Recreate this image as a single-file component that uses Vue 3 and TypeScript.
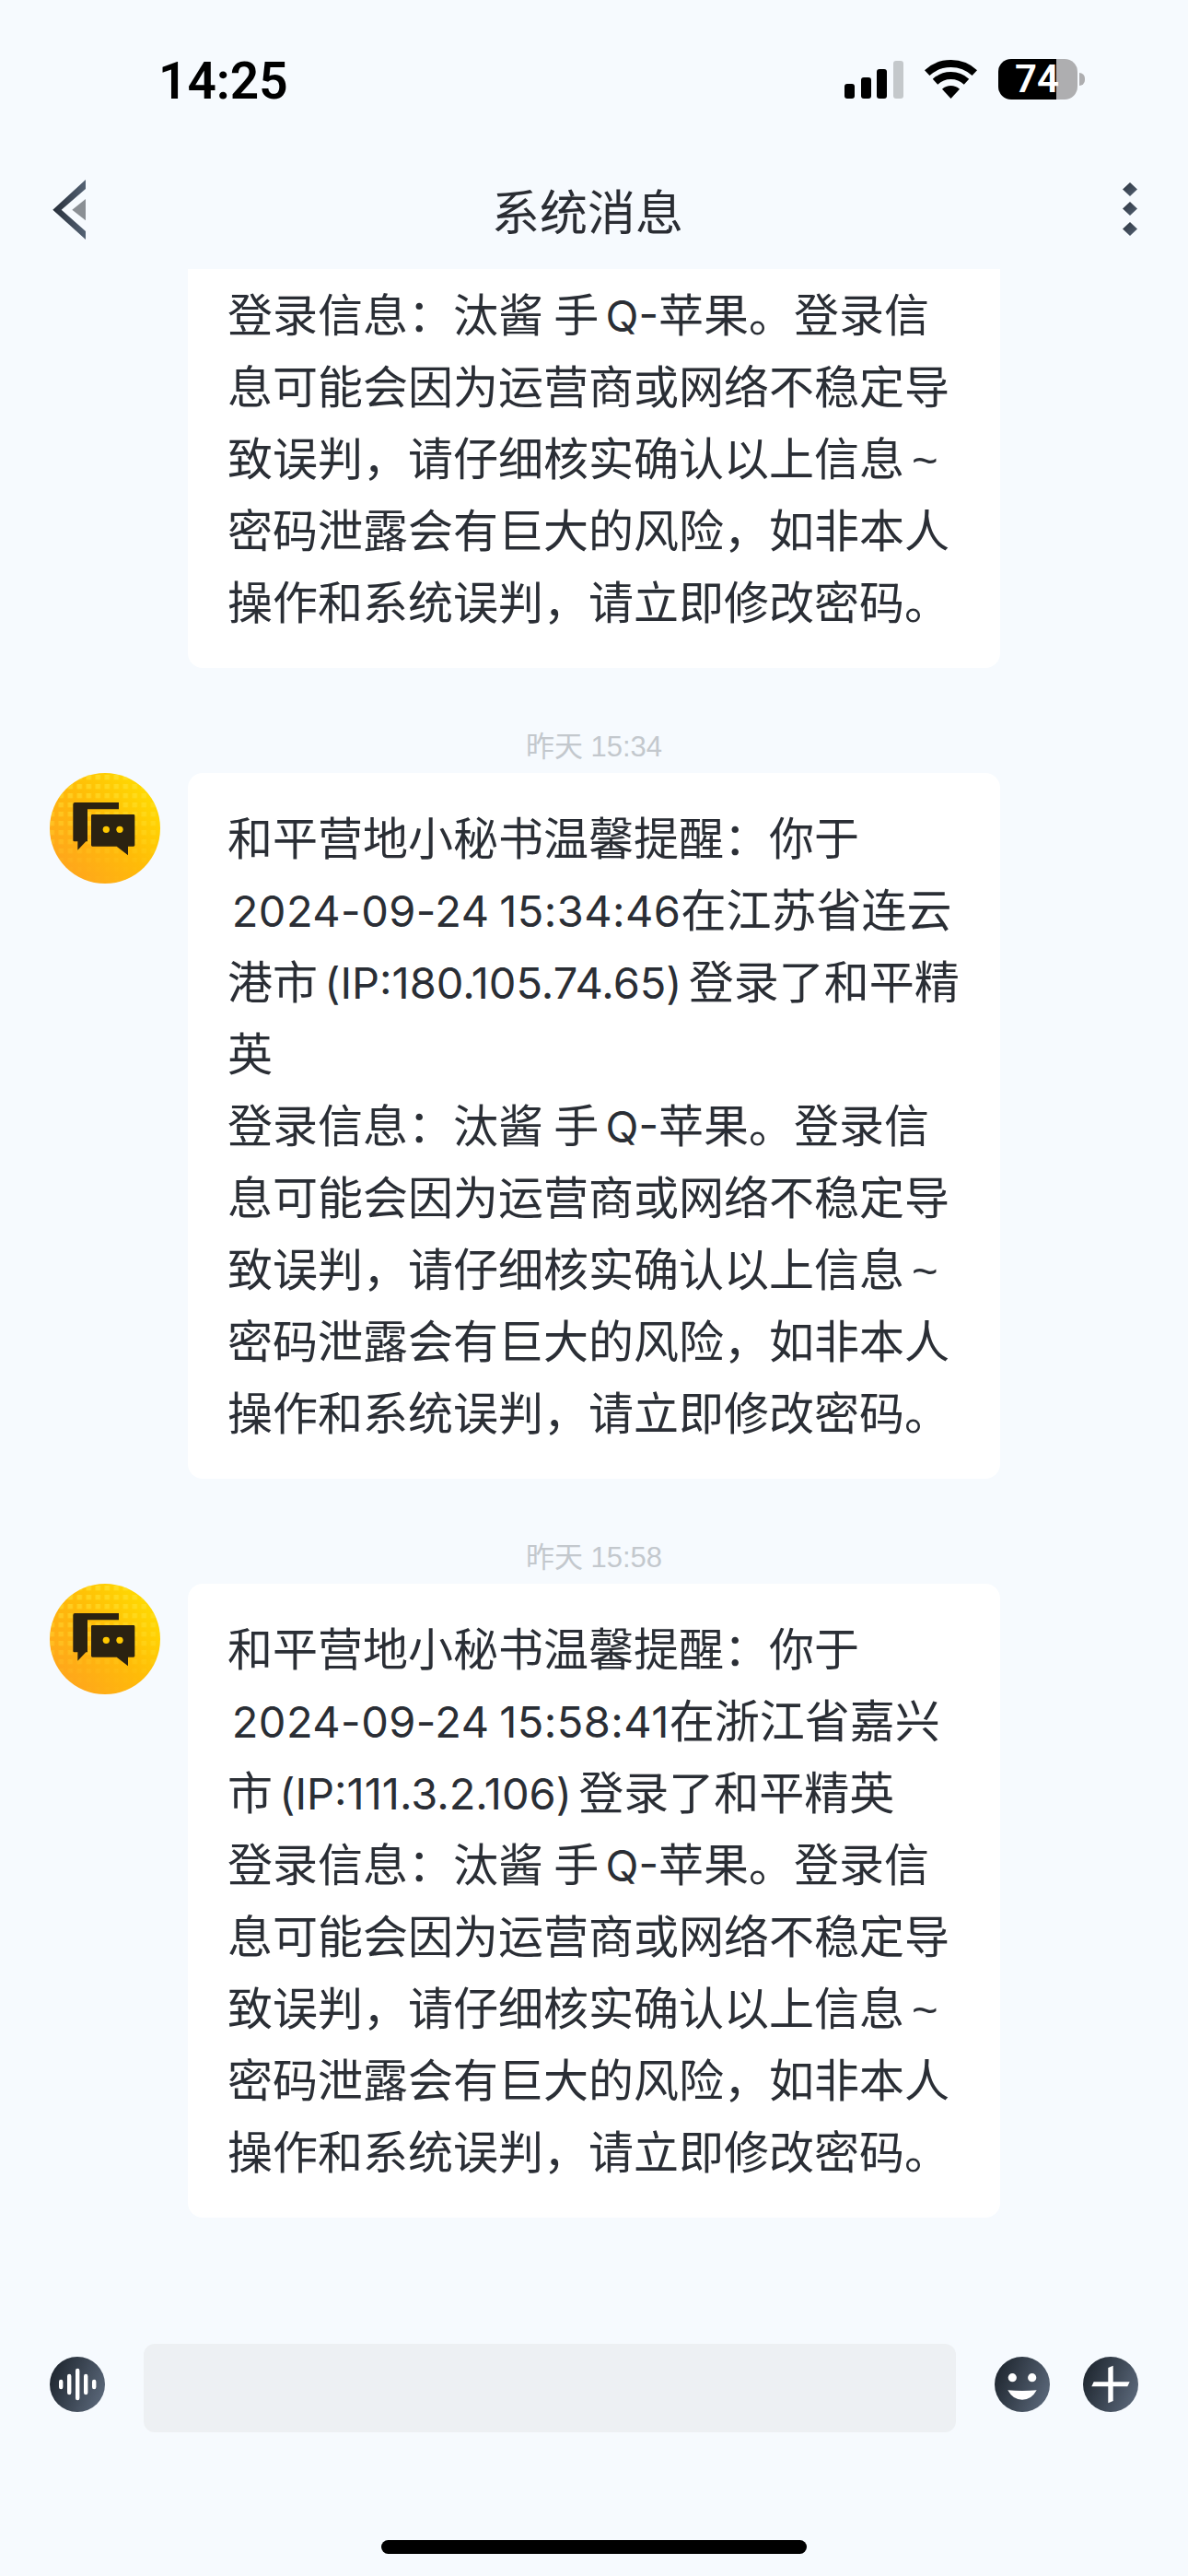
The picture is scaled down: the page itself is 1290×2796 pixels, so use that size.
<script setup lang="ts">
interface Message {
  id: number;
  time?: string;
  lines: string[];
}

const tail = [
  '登录信息：汰酱 手 Q-苹果。登录信',
  '息可能会因为运营商或网络不稳定导',
  '致误判，请仔细核实确认以上信息~',
  '密码泄露会有巨大的风险，如非本人',
  '操作和系统误判，请立即修改密码。',
];

const messages: Message[] = [
  { id: 1, lines: tail },
  {
    id: 2,
    time: '昨天 15:34',
    lines: [
      '和平营地小秘书温馨提醒：你于',
      ' 2024-09-24 15:34:46在江苏省连云',
      '港市 (IP:180.105.74.65) 登录了和平精',
      '英',
      ...tail,
    ],
  },
  {
    id: 3,
    time: '昨天 15:58',
    lines: [
      '和平营地小秘书温馨提醒：你于',
      ' 2024-09-24 15:58:41在浙江省嘉兴',
      '市 (IP:111.3.2.106) 登录了和平精英',
      ...tail,
    ],
  },
];

// ascii runs get their own span, they are set in another font than the CJK text
const parts = (line: string) => line.split(/([\x20-\x7e]+)/).filter(Boolean);
const isLatin = (part: string) => /^[\x20-\x7e]/.test(part);
const latinClass = (part: string) => {
  if (part === '~') return 'tilde';
  return part === ' ' ? 'latin gap' : 'latin';
};
</script>

<template>
  <div class="page">
    <header class="status">
      <span class="clock">14:25</span>
      <div class="status-icons">
        <svg class="signal" width="64" height="41" viewBox="0 0 64 41">
          <rect x="0" y="25" width="11" height="16" rx="3" fill="#000" />
          <rect x="18" y="18" width="11" height="23" rx="3" fill="#000" />
          <rect x="35" y="9" width="11" height="32" rx="3" fill="#000" />
          <rect x="53" y="0" width="11" height="41" rx="3" fill="#c4c8cb" />
        </svg>
        <svg class="wifi" width="57" height="42" viewBox="0 0 57 42">
          <path d="M2.7 14.1A38 38 0 0 1 54.3 14.1" fill="none" stroke="#000" stroke-width="8" />
          <path d="M11.5 23.7A25 25 0 0 1 45.5 23.7" fill="none" stroke="#000" stroke-width="8" />
          <path d="M28.5 42L19 31.8A14 14 0 0 1 38 31.8Z" fill="#000" />
        </svg>
        <div class="battery">
          <span class="battery-level">74</span>
          <span class="battery-nub"></span>
        </div>
      </div>
    </header>

    <nav class="navbar">
      <svg class="back" width="36" height="65" viewBox="7 9 36 65">
        <defs>
          <linearGradient id="backGrad" x1="0" y1="0" x2="1" y2="0">
            <stop offset="0" stop-color="#262e39" />
            <stop offset="1" stop-color="#556375" />
          </linearGradient>
        </defs>
        <path d="M7.3 41.7L43 9V19L16.7 41.7L43 65V74Z" fill="url(#backGrad)" />
        <path d="M28.3 41.7L43 30V53.3Z" fill="#8a8f94" />
      </svg>
      <span class="title">系统消息</span>
      <svg class="more" width="16" height="58" viewBox="0 0 16 58">
        <defs>
          <linearGradient id="moreGrad" x1="0" y1="0" x2="1" y2="1">
            <stop offset="0" stop-color="#2a323d" />
            <stop offset="1" stop-color="#556375" />
          </linearGradient>
        </defs>
        <path d="M8 0L16 7.5L8 15L0 7.5Z" fill="url(#moreGrad)" />
        <path d="M8 21L16 28.5L8 36L0 28.5Z" fill="url(#moreGrad)" />
        <path d="M8 43L16 50.5L8 58L0 50.5Z" fill="url(#moreGrad)" />
      </svg>
    </nav>

    <main class="list">
      <template v-for="msg in messages" :key="msg.id">
        <div v-if="msg.time" class="time">{{ msg.time }}</div>
        <div :class="['row', { cut: !msg.time }]">
          <svg v-if="msg.time" class="avatar" width="120" height="120" viewBox="0 0 360 360">
            <defs>
              <linearGradient :id="`av${msg.id}`" x1="0.9" y1="0.05" x2="0.1" y2="0.75">
                <stop offset="0" stop-color="#ffde00" />
                <stop offset="0.55" stop-color="#ffbb08" />
                <stop offset="1" stop-color="#ffa81a" />
              </linearGradient>
              <pattern :id="`dots${msg.id}`" x="-5" y="0" width="30" height="30" patternUnits="userSpaceOnUse">
                <rect x="4" y="6" width="16" height="16" fill="#ffe53a" />
              </pattern>
              <linearGradient :id="`fade${msg.id}`" x1="0" y1="0" x2="0" y2="1">
                <stop offset="0" stop-color="#fff" stop-opacity="0.75" />
                <stop offset="0.55" stop-color="#fff" stop-opacity="0.4" />
                <stop offset="0.85" stop-color="#fff" stop-opacity="0.05" />
              </linearGradient>
              <mask :id="`mask${msg.id}`">
                <rect width="360" height="360" :fill="`url(#fade${msg.id})`" />
              </mask>
            </defs>
            <circle cx="180" cy="180" r="180" :fill="`url(#av${msg.id})`" />
            <circle cx="180" cy="180" r="180" :fill="`url(#dots${msg.id})`" :mask="`url(#mask${msg.id})`" opacity="0.75" />
            <path d="M76 96H225V118H123V223H118L91 251V223H80Q76 223 76 219V102Q76 96 82 96Z" fill="#2b2211" />
            <path d="M139 135H273Q277 135 277 139V235Q277 239 273 239H255V268L218 239H139Q135 239 135 235V139Q135 135 139 135Z" fill="#2b2211" />
            <circle cx="184" cy="184" r="11" fill="#ffc800" />
            <circle cx="228" cy="184" r="11" fill="#ffc800" />
          </svg>
          <div class="bubble">
            <div v-for="(line, i) in msg.lines" :key="i" :class="['line', { indented: line.startsWith(' ') }]">
              <template v-for="(part, j) in parts(line)" :key="j">
                <span v-if="isLatin(part)" :class="latinClass(part)">{{ part }}</span>
                <template v-else>{{ part }}</template>
              </template>
            </div>
          </div>
        </div>
      </template>
    </main>

    <footer class="footer">
      <div class="input-row">
        <svg class="round" width="60" height="60" viewBox="0 0 60 60">
          <defs>
            <linearGradient id="iconGrad1" x1="0" y1="0.3" x2="1" y2="0.7">
              <stop offset="0" stop-color="#1f2730" />
              <stop offset="1" stop-color="#5a6779" />
            </linearGradient>
          </defs>
          <circle cx="30" cy="30" r="30" fill="url(#iconGrad1)" />
          <rect x="10" y="24.7" width="4.4" height="10.6" rx="2.2" fill="#fff" />
          <rect x="19" y="18.7" width="4.4" height="22.6" rx="2.2" fill="#fff" />
          <rect x="28" y="12.7" width="4.4" height="34.6" rx="2.2" fill="#fff" />
          <rect x="37" y="18.7" width="4.4" height="22.6" rx="2.2" fill="#fff" />
          <rect x="46" y="24.7" width="4.4" height="10.6" rx="2.2" fill="#fff" />
        </svg>
        <div class="input"></div>
        <svg class="round" width="60" height="60" viewBox="0 0 60 60">
          <defs>
            <linearGradient id="iconGrad2" x1="0" y1="0.3" x2="1" y2="0.7">
              <stop offset="0" stop-color="#1f2730" />
              <stop offset="1" stop-color="#5a6779" />
            </linearGradient>
          </defs>
          <circle cx="30" cy="30" r="30" fill="url(#iconGrad2)" />
          <circle cx="19.3" cy="22.7" r="4.6" fill="#fff" />
          <circle cx="40.7" cy="22.7" r="4.6" fill="#fff" />
          <path d="M14.3 36.3Q30 37.5 45.7 36.3Q40 46.8 30 46.8Q20 46.8 14.3 36.3Z" fill="#fff" />
        </svg>
        <svg class="round plus" width="60" height="60" viewBox="0 0 60 60">
          <defs>
            <linearGradient id="iconGrad3" x1="0" y1="0.3" x2="1" y2="0.7">
              <stop offset="0" stop-color="#1f2730" />
              <stop offset="1" stop-color="#5a6779" />
            </linearGradient>
          </defs>
          <circle cx="30" cy="30" r="30" fill="url(#iconGrad3)" />
          <path d="M27.3 12L32.7 9.7V27.3H50.7L48.3 32.3H32.7V48L27.3 50.3V32.3H9.3L11.7 27.3H27.3Z" fill="#fff" />
        </svg>
      </div>
      <div class="home-bar"></div>
    </footer>
  </div>
</template>

<style scoped>
.page {
  width: 1290px;
  height: 2796px;
  background: #f6fafe;
  display: flex;
  flex-direction: column;
  overflow: hidden;
  font-family: "Liberation Sans", "Noto Sans CJK SC", sans-serif;
}

.status {
  height: 162px;
  flex-shrink: 0;
  box-sizing: border-box;
  padding: 64px 112px 0 172px;
  display: flex;
  justify-content: space-between;
  align-items: flex-start;
}

.clock {
  font-family: Roboto, sans-serif;
  font-size: 55px;
  line-height: 48px;
  font-weight: 600;
  color: #000;
}

.status-icons {
  display: flex;
  align-items: center;
  height: 44px;
}

.signal { margin-right: 23px; }

.wifi { margin-right: 23px; }

.battery {
  position: relative;
  width: 86px;
  height: 44px;
  margin-right: 8px;
  border-radius: 14px;
  background: linear-gradient(to right, #000 73%, #aeaeb0 73%);
}

.battery-level {
  position: absolute;
  left: 18px;
  top: 0;
  font-family: Roboto, sans-serif;
  font-size: 42px;
  line-height: 44px;
  font-weight: 600;
  color: #fff;
}

.battery-nub {
  position: absolute;
  right: -8px;
  top: 15px;
  width: 6px;
  height: 14px;
  border-radius: 0 7px 7px 0;
  background: #aeaeb0;
}

.navbar {
  height: 130px;
  flex-shrink: 0;
  box-sizing: border-box;
  padding: 0 55px 0 57px;
  display: flex;
  justify-content: space-between;
  align-items: center;
}

.title {
  margin-right: 36px;
  font-size: 52px;
  color: #2a2d33;
}

.list {
  flex: 1;
  min-height: 0;
  overflow: hidden;
}

.time {
  margin-top: 66px;
  margin-bottom: 8px;
  height: 40px;
  line-height: 40px;
  text-align: center;
  font-size: 31px;
  color: #c3c8cd;
}

.row {
  display: flex;
  align-items: flex-start;
  gap: 30px;
  padding-left: 54px;
}

.row.cut {
  margin-top: -21px;
  padding-left: 204px;
}

.avatar {
  flex-shrink: 0;
}

.bubble {
  width: 882px;
  box-sizing: border-box;
  padding: 33px 44px 31px 43px;
  background: #fff;
  border-radius: 16px;
}

.line {
  height: 78px;
  font-size: 49px;
  line-height: 78px;
  color: #2a2e35;
  white-space: pre;
}

.latin {
  font-family: Inter, "Liberation Sans", sans-serif;
  font-size: 47px;
  word-spacing: -6px;
}

.latin.gap {
  word-spacing: -2px;
}

.indented {
  margin-left: -6px;
}

.indented .latin {
  letter-spacing: 0.45px;
  word-spacing: -3px;
}

.tilde {
  margin-left: 8px;
}

.footer {
  height: 252px;
  flex-shrink: 0;
}

.input-row {
  height: 96px;
  padding: 0 54px;
  display: flex;
  align-items: flex-start;
  gap: 42px;
}

.round {
  flex-shrink: 0;
  margin-top: 14px;
}

.plus {
  margin-left: -6px;
}

.input {
  flex: 1;
  height: 96px;
  border-radius: 12px;
  background: #edf0f3;
}

.home-bar {
  width: 462px;
  height: 15px;
  margin: 117px auto 0;
  border-radius: 8px;
  background: #000;
}
</style>
